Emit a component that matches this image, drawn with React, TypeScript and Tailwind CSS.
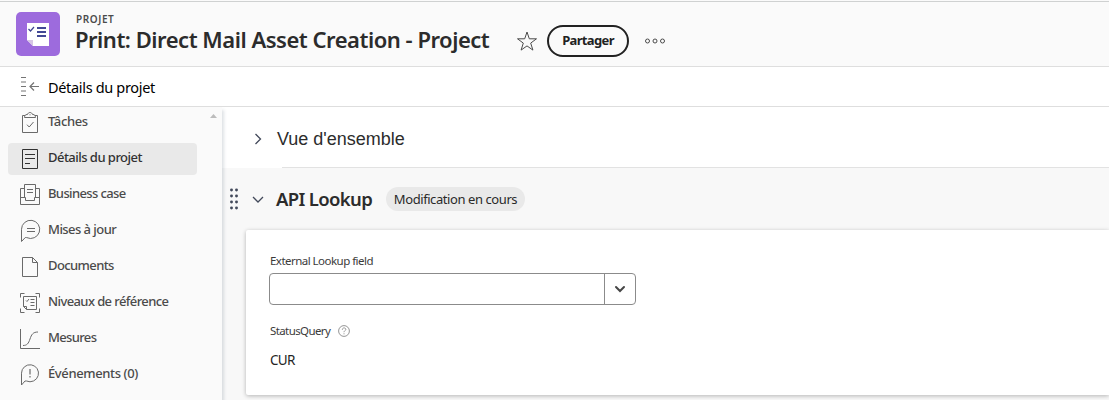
import type { ReactNode } from "react";

const svg = {
  fill: "none",
  stroke: "currentColor",
  strokeWidth: 1,
  className: "block h-6 w-6 shrink-0",
  viewBox: "0 0 24 24",
};

const TasksIcon = () => (
  <svg {...svg}>
    <path d="M7 4.5H4.500v17h15v-17H17M6.500 6.500h11c0-2-1-3-2.500-3h-.5c-.4-1.300-1.300-2-2.500-2s-2.100.7-2.500 2H9c-1.500 0-2.500 1-2.500 3zM9 13.700l2.200 2.300L15.500 11" />
    <path d="M11.5 3.8h1" />
  </svg>
);

const DetailsIcon = () => (
  <svg {...svg}>
    <path d="M4.5 2.5h15v19h-15zM7 7.5h10M7 11.5h10M7 16.5h5" />
  </svg>
);

const BusinessIcon = () => (
  <svg {...svg}>
    <path d="M6.5 5.5h-4v16h19v-16h-4M2.5 14.5h5v3h9v-3h5M6.5 14.5v-13h11v13M9 6.5h6M9 9.5h6" />
  </svg>
);

const UpdatesIcon = () => (
  <svg {...svg}>
    <path d="M3.5 22.500V10.300A9.100 9.100 0 1 1 8.700 18.600L7.300 18.500zM9 9.500h8M9 12.500h8" />
  </svg>
);

const DocumentIcon = () => (
  <svg {...svg}>
    <path d="M4.5 2.5h10l5 5v14h-15zM14.5 2.5v5h5" />
  </svg>
);

const BaselineIcon = () => (
  <svg {...svg}>
    <path d="M2.5 6.5v-4h4M17.5 2.5h4v4M21.5 17.5v4h-4M6.5 21.5h-4v-4M5.500 5.500h13v13h-10l-3-3zM5.500 15.500h3v3M8 9.500l1 1 2-2.500M12.500 8.500h4M12.500 11.500h4M12.500 14.500h4" />
  </svg>
);

const MetricsIcon = () => (
  <svg {...svg}>
    <path d="M2.5 2v19.500H22M5 18.500c4 0 5.500-2 7-6.500s3-7 8-7" />
  </svg>
);

const EventsIcon = () => (
  <svg {...svg}>
    <path d="M3.500 22V10.200A8.500 8.500 0 1 1 8.500 18L7 18z" />
    <path d="M12 6v5.500M12 13v1.500" strokeWidth="1.200" />
  </svg>
);

const items: { label: string; icon: ReactNode; tracking: string; active?: boolean }[] = [
  { label: "Tâches", icon: <TasksIcon />, tracking: "tracking-[-0.4px]" },
  { label: "Détails du projet", icon: <DetailsIcon />, tracking: "tracking-[-0.53px]", active: true },
  { label: "Business case", icon: <BusinessIcon />, tracking: "tracking-[-0.63px]" },
  { label: "Mises à jour", icon: <UpdatesIcon />, tracking: "tracking-[-0.55px]" },
  { label: "Documents", icon: <DocumentIcon />, tracking: "tracking-[-0.6px]" },
  { label: "Niveaux de référence", icon: <BaselineIcon />, tracking: "tracking-[-0.6px]" },
  { label: "Mesures", icon: <MetricsIcon />, tracking: "tracking-[-0.65px]" },
  { label: "Événements (0)", icon: <EventsIcon />, tracking: "tracking-[-0.38px]" },
];

function Header() {
  return (
    <header className="flex h-[67px] shrink-0 border-b border-[#dedede] bg-[#fafafa] pt-px">
      <div className="flex w-full border-t border-[#cfd1d1] pl-4">
        <svg className="mt-2.5 h-11 w-11 shrink-0" viewBox="0 0 44 44">
          <rect width="44" height="44" rx="5" fill="#9d6bdd" />
          <path d="M11 11h22v23H17l-6-6z" fill="#fff" />
          <path d="M11 28h6v6z" fill="#d6c5e5" />
          <path d="M12.500 17l2 2 3.500-4" fill="none" stroke="#3f4592" strokeWidth="1.200" />
          <path d="M21 16h9M21 20h9M21 24h9" stroke="#424895" strokeWidth="2" />
        </svg>
        <div className="ml-4 w-[440px] shrink-0 whitespace-nowrap">
          <div className="mt-[10px] h-4 text-[10px] leading-[15px] font-semibold tracking-[0.600px] text-[#4b4b4b]">PROJET</div>
          <h1 className="mt-[-3px] ml-[-1px] text-[22px] leading-7 font-semibold tracking-[-0.48px] text-[#2c2c2c]">
            Print: Direct Mail Asset Creation - Project
          </h1>
        </div>
        <svg className="mt-7 h-[22px] w-[22px] shrink-0" viewBox="0 0 22 22" fill="none" stroke="#4b4b4b">
          <path d="M11 2l2.300 6.800h7.200l-5.800 4.300 2.200 7L11 15.900 5.100 20.100l2.200-7-5.800-4.300h7.200z" />
        </svg>
        <button className="mt-[23px] ml-[9px] h-8 w-[82px] rounded-full border-2 border-[#222] pb-0.5 text-[13px] leading-[26px] font-bold tracking-[-0.65px] text-[#222]">
          Partager
        </button>
        <svg className="mt-9 ml-[15px] h-[6px] w-[22px]" viewBox="0 0 22 6" fill="none" stroke="#4b4b4b">
          <circle cx="3.500" cy="3" r="2" />
          <circle cx="11" cy="3" r="2" />
          <circle cx="18.500" cy="3" r="2" />
        </svg>
      </div>
    </header>
  );
}

function Sidebar() {
  return (
    <nav className="z-10 flex w-[222px] shrink-0 bg-[#fafafa] shadow-[2px_3px_3px_rgba(70,90,110,0.18)]">
      <ul className="ml-2 w-[189px] space-y-1">
        {items.map((item) => (
          <li
            key={item.label}
            className={
              item.active
                ? "flex h-8 items-center rounded bg-[#e9e9e9] text-[#323232]"
                : "flex h-8 items-center rounded text-[#4b4b4b]"
            }
          >
            <span className={item.active ? "ml-2.5" : "ml-2.5 text-[#6a6a6a]"}>{item.icon}</span>
            <span className={`${item.tracking} mt-[-4px] ml-1.5 text-[13px] leading-5 font-medium whitespace-nowrap`}>{item.label}</span>
          </li>
        ))}
      </ul>
      <svg className="mt-[7px] ml-[13px] h-[4px] w-[7px]" viewBox="0 0 7 4">
        <path d="M0 4L3.500 0 7 4z" fill="#bcbcbc" />
      </svg>
    </nav>
  );
}

function LookupCard() {
  return (
    <section className="ml-6 h-[165px] rounded-l-[2px] bg-white pt-[21px] pl-[23px] shadow-[0_1px_4px_rgba(0,0,0,0.28)]">
      <label className="block pl-px text-[11.500px] leading-5 tracking-[-0.53px] text-[#3b3b3b]">External Lookup field</label>
      <div className="mt-[2px] flex h-8 w-[367px] rounded border border-[#8b8b8b]">
        <div className="flex-1" />
        <div className="flex w-[31px] items-center justify-center border-l border-[#8b8b8b]">
          <svg className="h-2 w-3" viewBox="0 0 12 8" fill="none" stroke="#464646" strokeWidth="2" strokeLinecap="round">
            <path d="M2 2l4 4 4-4" />
          </svg>
        </div>
      </div>
      <div className="mt-4 flex h-5 items-center pl-px text-[11.500px] tracking-[-0.6px] text-[#3b3b3b]">
        <span className="w-[68px]">StatusQuery</span>
        <svg className="h-3 w-3" viewBox="0 0 12 12" fill="none" stroke="#8a8a8a" strokeWidth="0.900">
          <circle cx="6" cy="6" r="5.400" />
          <path d="M4.300 4.800c0-2.600 3.700-2.300 3.500-.3C7.700 5.600 6 5.700 6 7.200M6 8.300v1" />
        </svg>
      </div>
      <div className="mt-[9px] pl-px text-[13.500px] leading-5 tracking-[-0.700px] text-[#242424]">CUR</div>
    </section>
  );
}

export default function App() {
  return (
    <div className="flex h-[400px] w-full flex-col overflow-hidden bg-white font-['Noto_Sans',sans-serif]">
      <Header />
      <div className="z-20 flex h-10 shrink-0 items-center border-b border-[#dedede] bg-white pl-[21px]">
        <svg className="h-5 w-[19px]" viewBox="0 0 19 20" fill="none" stroke="#747474">
          <path d="M0 .5h5M0 5h5M0 9.500h5M0 14h5M0 18.500h5" />
          <path d="M18 9.500H9M13 5.500L9 9.500l4 4" strokeWidth="1.200" />
        </svg>
        <span className="ml-[8px] text-[14.500px] leading-5 tracking-[-0.33px] text-black">Détails du projet</span>
      </div>
      <div className="flex min-h-0 flex-1">
        <Sidebar />
        <main className="min-w-0 flex-1 bg-[#f8f8f8]">
          <div className="flex h-[61px] flex-col bg-white">
            <div className="flex h-[60px] items-center pb-px pl-[30px] pt-1">
              <svg className="h-3 w-3" viewBox="0 0 12 12" fill="none" stroke="#42495a" strokeWidth="1.300">
                <path d="M3.500 1l5 5-5 5" />
              </svg>
              <h2 className="ml-[13px] font-['Liberation_Sans',Arial,sans-serif] text-[18px] leading-6 text-[#2c2c2c]">Vue d'ensemble</h2>
            </div>
            <div className="ml-[60px] h-px bg-[#e2e2e2]" />
          </div>
          <div className="flex h-[62px] items-center pl-2">
            <svg className="h-[22px] w-2" viewBox="0 0 8 22" fill="#42495a">
              {[2, 8, 14, 20].map((y) => (
                <g key={y}>
                  <circle cx="1.500" cy={y} r="1.450" />
                  <circle cx="6.500" cy={y} r="1.450" />
                </g>
              ))}
            </svg>
            <svg className="ml-[14px] h-3 w-3" viewBox="0 0 12 12" fill="none" stroke="#42495a" strokeWidth="1.300">
              <path d="M1 4l5 5 5-5" />
            </svg>
            <h2 className="ml-3 w-[110px] text-[18.500px] leading-6 font-semibold tracking-[-0.65px] whitespace-nowrap text-[#2c2c2c]">API Lookup</h2>
            <span className="h-6 w-[139px] rounded-full bg-[#e9e9e9] text-center text-[13px] leading-6 tracking-[-0.42px] whitespace-nowrap text-[#292929]">
              Modification en cours
            </span>
          </div>
          <LookupCard />
        </main>
      </div>
    </div>
  );
}
